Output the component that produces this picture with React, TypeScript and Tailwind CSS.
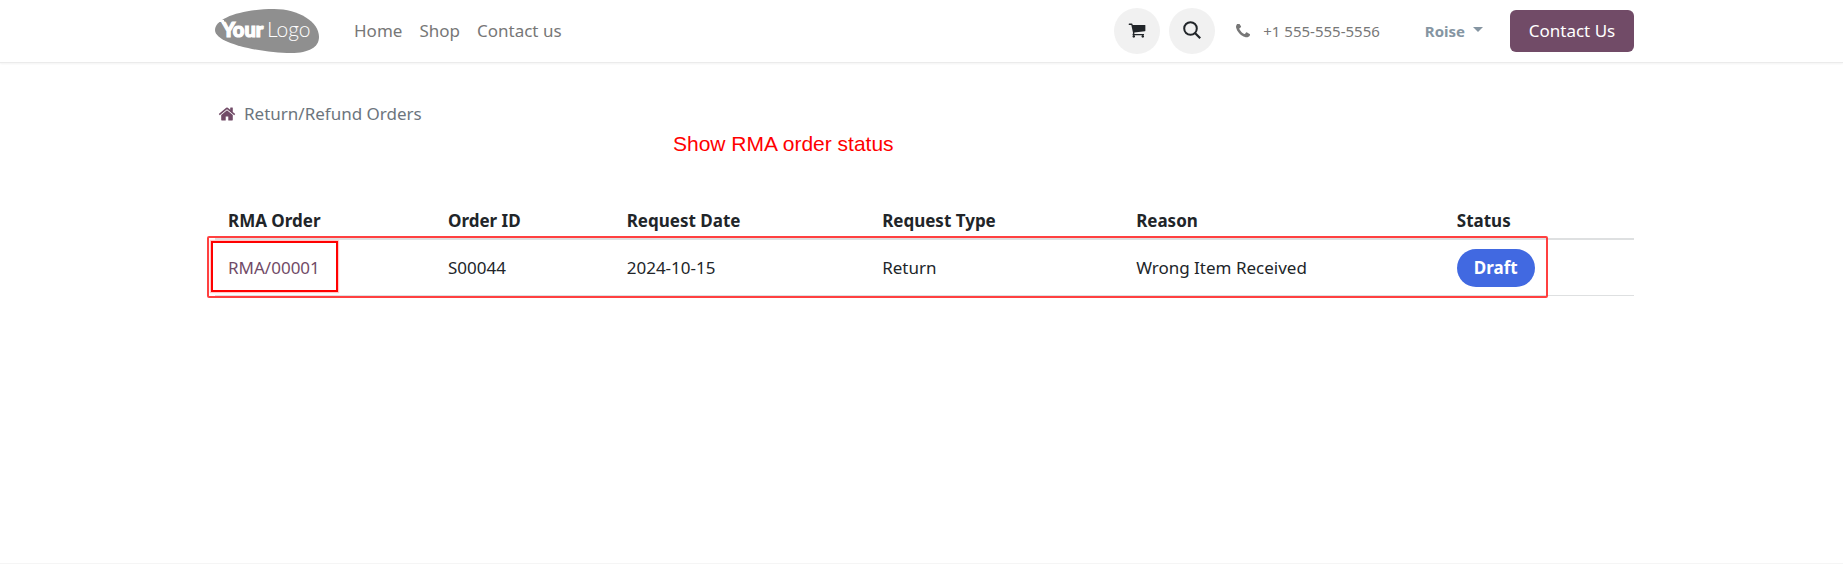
import React from "react";

const navLinks = ["Home", "Shop", "Contact us"];

const columns = [
  { label: "RMA Order", width: "w-[15.5%]" },
  { label: "Order ID", width: "w-[12.6%]" },
  { label: "Request Date", width: "w-[18%]" },
  { label: "Request Type", width: "w-[17.9%]" },
  { label: "Reason", width: "w-[22.6%]" },
  { label: "Status", width: "w-[13.4%]" },
];

const orders = [
  {
    name: "RMA/00001",
    order: "S00044",
    date: "2024-10-15",
    type: "Return",
    reason: "Wrong Item Received",
    status: "Draft",
  },
];

function Logo() {
  return (
    <svg viewBox="0 0 104 44" className="h-11 w-26" role="img" aria-label="Your Logo">
      <path
        d="M0 21C0 9 27 0 59 0C84 0 104 13 104 28C104 38 94 44 76 44C48 44 0 35 0 21Z"
        fill="#8f8f8f"
      />
      <path d="M4 11h5v2h-5zM7 13h3v2h-3z" fill="#fff" />
      <text x="7" y="28" fill="#fff" stroke="#fff" strokeWidth="1.200" fontFamily="Lato, sans-serif" fontWeight="900" fontSize="20">
        Your
      </text>
      <text x="52" y="28" fill="#fff" fontFamily="Lato, sans-serif" fontWeight="300" fontSize="21">
        Logo
      </text>
    </svg>
  );
}

function CartIcon() {
  return (
    <svg viewBox="0 96 1792 1792" className="size-[18px]" fill="currentColor" aria-hidden="true">
      <path d="M704 1536q0 52-38 90t-90 38-90-38-38-90 38-90 90-38 90 38 38 90zm896 0q0 52-38 90t-90 38-90-38-38-90 38-90 90-38 90 38 38 90zm128-1088v512q0 24-16.500 42.500t-40.500 21.500l-1044 122q13 60 13 70 0 16-24 64h920q26 0 45 19t19 45-19 45-45 19h-1024q-26 0-45-19t-19-45q0-11 8-31.500t16-36 21.500-40 15.500-29.500l-177-823h-204q-26 0-45-19t-19-45 19-45 45-19h256q16 0 28.500 6.500t19.500 15.500 13 24.500 8 26 5.500 29.500 4.500 26h1201q26 0 45 19t19 45z" />
    </svg>
  );
}

function SearchIcon() {
  return (
    <svg viewBox="0 0 18 18" className="mb-0.5 size-[18px]" fill="none" stroke="currentColor" aria-hidden="true">
      <circle cx="7.500" cy="7.500" r="6.300" strokeWidth="2" />
      <path d="M12 12l5.200 5.200" strokeWidth="2.200" />
    </svg>
  );
}

function PhoneIcon() {
  return (
    <svg viewBox="192 192 1408 1408" className="size-[14px]" fill="currentColor" aria-hidden="true">
      <path d="M1600 1240q0 27-10 70.500t-21 68.500q-21 50-122 106-94 51-186 51-27 0-53-3.500t-57.500-12.500-47-14.500-55.500-20.500-49-18q-98-35-175-83-127-79-264-216t-216-264q-48-77-83-175-3-9-18-49t-20.500-55.500-14.500-47-12.500-57.500-3.500-53q0-92 51-186 56-101 106-122 25-11 68.500-21t70.500-10q14 0 21 3 18 6 53 76 11 19 30 54t35 63.500 31 53.500q3 4 17.500 25t21.500 35.500 7 28.500q0 20-28.500 50t-62 55-62 53-28.500 46q0 9 5 22.500t8.500 20.500 14 24 11.500 19q76 137 174 235t235 174q2 1 19 11.500t24 14 20.500 8.500 22.500 5q18 0 46-28.500t53-62 55-62 50-28.500q14 0 28.500 7t35.500 21.500 25 17.500q25 15 53.500 31t63.500 35 54 30q70 35 76 53 3 7 3 21z" />
    </svg>
  );
}

function HomeIcon() {
  return (
    <svg viewBox="0 0 1792 1792" className="size-[18px]" fill="currentColor" aria-hidden="true">
      <path d="M1472 992v480q0 26-19 45t-45 19h-384v-384h-256v384h-384q-26 0-45-19t-19-45v-480q0-1 .5-3t.5-3l575-474 575 474q1 2 1 6zm223-69l-62 74q-8 9-21 11h-3q-13 0-21-7l-692-577-692 577q-12 8-24 7-13-2-21-11l-62-74q-8-10-7-23.500t11-21.500l719-599q32-26 76-26t76 26l244 204v-195q0-14 9-23t23-9h192q14 0 23 9t9 23v408l219 182q10 8 11 21.500t-7 23.500z" />
    </svg>
  );
}

function Header() {
  return (
    <header className="border-b border-[#ebebeb] bg-white pl-1.5 shadow-[0_1px_2px_rgba(0,0,0,0.05)]">
      <div className="mx-auto flex h-[62px] max-w-[1451px] items-center px-4">
        <a href="#home" aria-label="Home page">
          <Logo />
        </a>
        <nav className="ml-[35px] flex gap-[17px] text-[#777777]">
          {navLinks.map((label) => (
            <a key={label} href="#nav">
              {label}
            </a>
          ))}
        </nav>
        <div className="ml-auto flex items-center">
          <div className="flex gap-[9px]">
            <button aria-label="Cart" className="flex size-[46px] items-center justify-center rounded-full bg-[#f1f1f1]">
              <CartIcon />
            </button>
            <button aria-label="Search" className="flex size-[46px] items-center justify-center rounded-full bg-[#f1f1f1]">
              <SearchIcon />
            </button>
          </div>
          <a href="tel:+15555555556" className="ml-[21px] flex items-center gap-[13px] text-[15px] text-[#777777]">
            <PhoneIcon />
            +1 555-555-5556
          </a>
          <button className="ml-[45px] flex items-center gap-2 text-[15px] font-bold text-[#8595a2]">
            Roise
            <svg viewBox="0 0 10 5" className="mb-1 h-[5px] w-2.5" fill="currentColor" aria-hidden="true">
              <path d="M0 0h10L5 5z" />
            </svg>
          </button>
          <a
            href="#contact"
            className="ml-[27px] flex h-[42px] w-[124px] items-center justify-center rounded-md bg-[#714b67] text-white"
          >
            Contact Us
          </a>
        </div>
      </div>
    </header>
  );
}

function StatusTable() {
  return (
    <div className="relative">
      <table className="w-full table-fixed text-left">
        <thead>
          <tr className="h-[38px] border-b-2 border-[#dee0e1]">
            {columns.map((column) => (
              <th key={column.label} className={`${column.width} px-[13px] pt-0.5 font-bold`}>
                {column.label}
              </th>
            ))}
          </tr>
        </thead>
        <tbody>
          {orders.map((order) => (
            <tr key={order.name} className="h-14 border-b border-[#dee0e1]">
              <td className="px-[13px] pt-0.5">
                <a href="#rma" className="text-[#714b67]">
                  {order.name}
                </a>
              </td>
              <td className="px-[13px] pt-0.5">{order.order}</td>
              <td className="px-[13px] pt-0.5">{order.date}</td>
              <td className="px-[13px] pt-0.5">{order.type}</td>
              <td className="px-[13px] pt-0.5">{order.reason}</td>
              <td className="px-[13px] pt-0.5">
                <span className="inline-flex h-[38px] items-center rounded-full bg-[#4169e1] px-[17px] font-bold text-white">
                  {order.status}
                </span>
              </td>
            </tr>
          ))}
        </tbody>
      </table>
      <div className="pointer-events-none absolute -left-2 right-[86px] -bottom-0.5 h-[62px] rounded-xs border-2 border-[#ff4040]" />
      <div className="pointer-events-none absolute -left-1 bottom-1 h-[51px] w-[127px] border-2 border-[#ff0000] shadow-[0_0_1px_1px_#ffc8c8]" />
    </div>
  );
}

export default function App() {
  return (
    <div className="flex min-h-screen flex-col border-b border-[#f5f5f5] bg-white font-['Noto_Sans',sans-serif] text-[17px] leading-6 text-[#212529]">
      <Header />
      <main className="pl-1.5">
        <div className="mx-auto max-w-[1451px] px-4">
          <nav aria-label="Breadcrumb" className="flex items-center gap-2 pt-[39px] pl-[3px] text-[#6c757d]">
            <a href="#account" aria-label="Account" className="text-[#714b67]">
              <HomeIcon />
            </a>
            <span>Return/Refund Orders</span>
          </nav>
          <p className="pt-1.5 pb-[45px] pl-[458px] font-['Liberation_Sans',sans-serif] text-[21px] text-[#ff0000]">
            Show RMA order status
          </p>
          <StatusTable />
        </div>
      </main>
    </div>
  );
}
